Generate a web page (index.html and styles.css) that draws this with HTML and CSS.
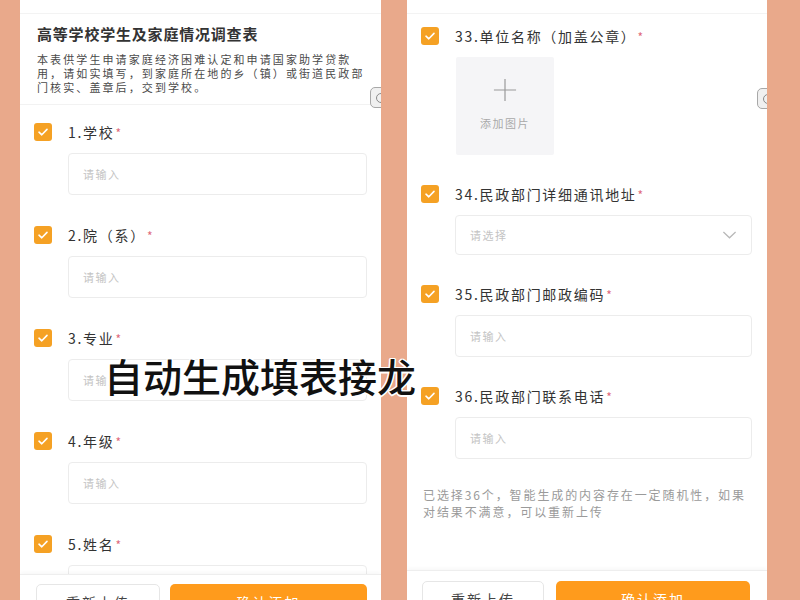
FILE: index.html
```html
<!DOCTYPE html>
<html lang="zh">
<head>
<meta charset="utf-8">
<title>自动生成填表接龙</title>
<link rel="stylesheet" href="styles.css">
</head>
<body>
<div class="stage">
  <section class="panel panel-left">
    <div class="nav"></div>
    <div class="side-tab"><span class="side-ring"></span></div>
    <div class="content">
      <header class="form-head">
        <h1 class="form-title">高等学校学生及家庭情况调查表</h1>
        <p class="form-desc">本表供学生申请家庭经济困难认定和申请国家助学贷款<br>用，请如实填写，到家庭所在地的乡（镇）或街道民政部<br>门核实、盖章后，交到学校。</p>
      </header>
      <div class="items items-left">
        <div class="item">
          <div class="item-row"><span class="check"><svg viewBox="0 0 18 18"><path d="M5 9.2l2.8 2.6L13 6.4" fill="none" stroke="#fff" stroke-width="1.6" stroke-linecap="round" stroke-linejoin="round"/></svg></span><span class="label">1.学校<i class="req">*</i></span></div>
          <div class="field">请输入</div>
        </div>
        <div class="item">
          <div class="item-row"><span class="check"><svg viewBox="0 0 18 18"><path d="M5 9.2l2.8 2.6L13 6.4" fill="none" stroke="#fff" stroke-width="1.6" stroke-linecap="round" stroke-linejoin="round"/></svg></span><span class="label">2.院（系）<i class="req">*</i></span></div>
          <div class="field">请输入</div>
        </div>
        <div class="item">
          <div class="item-row"><span class="check"><svg viewBox="0 0 18 18"><path d="M5 9.2l2.8 2.6L13 6.4" fill="none" stroke="#fff" stroke-width="1.6" stroke-linecap="round" stroke-linejoin="round"/></svg></span><span class="label">3.专业<i class="req">*</i></span></div>
          <div class="field">请输入</div>
        </div>
        <div class="item">
          <div class="item-row"><span class="check"><svg viewBox="0 0 18 18"><path d="M5 9.2l2.8 2.6L13 6.4" fill="none" stroke="#fff" stroke-width="1.6" stroke-linecap="round" stroke-linejoin="round"/></svg></span><span class="label">4.年级<i class="req">*</i></span></div>
          <div class="field">请输入</div>
        </div>
        <div class="item">
          <div class="item-row"><span class="check"><svg viewBox="0 0 18 18"><path d="M5 9.2l2.8 2.6L13 6.4" fill="none" stroke="#fff" stroke-width="1.6" stroke-linecap="round" stroke-linejoin="round"/></svg></span><span class="label">5.姓名<i class="req">*</i></span></div>
          <div class="field">请输入</div>
        </div>
      </div>
    </div>
    <footer class="footer footer-left">
      <button class="btn btn-ghost btn-left">重新上传</button>
      <button class="btn btn-primary btn-right">确认添加</button>
    </footer>
  </section>

  <section class="panel panel-right">
    <div class="nav"></div>
    <div class="side-tab"><span class="side-ring"></span></div>
    <div class="content">
      <div class="items items-right">
        <div class="item">
          <div class="item-row"><span class="check"><svg viewBox="0 0 18 18"><path d="M5 9.2l2.8 2.6L13 6.4" fill="none" stroke="#fff" stroke-width="1.6" stroke-linecap="round" stroke-linejoin="round"/></svg></span><span class="label">33.单位名称（加盖公章）<i class="req">*</i></span></div>
          <div class="upload">
            <svg class="plus" viewBox="0 0 26 26"><path d="M13 1v24M1 13h24" stroke="#9a9a9a" stroke-width="1.3" fill="none"/></svg>
            <span class="upload-text">添加图片</span>
          </div>
        </div>
        <div class="item">
          <div class="item-row"><span class="check"><svg viewBox="0 0 18 18"><path d="M5 9.2l2.8 2.6L13 6.4" fill="none" stroke="#fff" stroke-width="1.6" stroke-linecap="round" stroke-linejoin="round"/></svg></span><span class="label">34.民政部门详细通讯地址<i class="req">*</i></span></div>
          <div class="field field-select"><span>请选择</span><svg class="chev" viewBox="0 0 16 10"><path d="M1.5 1.8L8 8l6.5-6.2" fill="none" stroke="#b8b8b8" stroke-width="1.3"/></svg></div>
        </div>
        <div class="item">
          <div class="item-row"><span class="check"><svg viewBox="0 0 18 18"><path d="M5 9.2l2.8 2.6L13 6.4" fill="none" stroke="#fff" stroke-width="1.6" stroke-linecap="round" stroke-linejoin="round"/></svg></span><span class="label">35.民政部门邮政编码<i class="req">*</i></span></div>
          <div class="field">请输入</div>
        </div>
        <div class="item">
          <div class="item-row"><span class="check"><svg viewBox="0 0 18 18"><path d="M5 9.2l2.8 2.6L13 6.4" fill="none" stroke="#fff" stroke-width="1.6" stroke-linecap="round" stroke-linejoin="round"/></svg></span><span class="label">36.民政部门联系电话<i class="req">*</i></span></div>
          <div class="field">请输入</div>
        </div>
      </div>
      <p class="note">已选择36个，智能生成的内容存在一定随机性，如果<br>对结果不满意，可以重新上传</p>
    </div>
    <footer class="footer footer-right">
      <button class="btn btn-ghost btn-left">重新上传</button>
      <button class="btn btn-primary btn-right">确认添加</button>
    </footer>
  </section>

  <div class="overlay">自动生成填表接龙</div>
</div>
</body>
</html>
```

FILE: styles.css
```css
* { box-sizing: border-box; }
html, body { margin: 0; padding: 0; }
body {
  width: 800px;
  height: 600px;
  overflow: hidden;
  background: #e9a98b;
  font-family: "Noto Sans CJK SC", "Noto Sans", sans-serif;
  color: #333;
}
.stage {
  position: relative;
  width: 800px;
  height: 600px;
  display: flex;
  padding-left: 20px;
  gap: 26px;
}
.panel {
  position: relative;
  height: 600px;
  background: #fff;
  display: flex;
  flex-direction: column;
  overflow: hidden;
}
.panel-left { width: 361px; }
.panel-right { width: 360px; }

.nav {
  flex-shrink: 0;
  height: 14px;
  border-bottom: 1px solid #f3f3f3;
}
.side-tab {
  position: absolute;
  right: -11px;
  top: 87px;
  width: 22px;
  height: 21px;
  border: 1.5px solid #a8a8a8;
  border-radius: 5px;
  background: #f0f0f0;
  display: flex;
  align-items: center;
  justify-content: center;
}
.panel-right .side-tab { top: 88px; right: -12px; }
.side-ring {
  width: 10px;
  height: 10px;
  border: 1.5px solid #8a8a8a;
  border-radius: 50%;
}
.content {
  flex: 1;
  min-height: 0;
  overflow: hidden;
}
.form-head {
  padding: 10px 17px 10px;
  border-bottom: 1px solid #f2f2f2;
}
.form-title {
  margin: 0;
  font-size: 15px;
  line-height: 20px;
  font-weight: 700;
  letter-spacing: 0.8px;
  color: #333;
}
.form-desc {
  margin: 8px 0 0;
  font-size: 11px;
  line-height: 14px;
  letter-spacing: 2.1px;
  color: #4a4a4a;
  white-space: nowrap;
}
.items { padding-left: 14px; }
.items-left { padding-top: 18px; padding-right: 14px; }
.items-right { padding-top: 13px; padding-right: 15px; }
.item { margin-bottom: 31px; }
.items-right .item { margin-bottom: 30px; }
.item-row {
  display: flex;
  align-items: center;
  height: 18px;
  gap: 16px;
}
.check {
  width: 18px;
  height: 18px;
  border-radius: 3px;
  background: #f5a124;
  display: flex;
  flex-shrink: 0;
}
.check svg { width: 18px; height: 18px; }
.label {
  font-size: 14px;
  letter-spacing: 1.7px;
  color: #333;
  white-space: nowrap;
}
.req {
  font-style: normal;
  color: #e06a7c;
  font-size: 12px;
  margin-left: 1px;
}
.field {
  margin: 12px 0 0 34px;
  height: 42px;
  border: 1px solid #ececec;
  border-radius: 4px;
  padding-left: 14px;
  display: flex;
  align-items: center;
  font-size: 11px;
  letter-spacing: 1.5px;
  color: #c4c4c4;
}
.field-select {
  height: 40px;
  justify-content: space-between;
  padding-right: 14px;
}
.chev { width: 15px; height: 10px; }
.upload {
  margin: 12px 0 0 35px;
  width: 98px;
  height: 98px;
  background: #f5f5f7;
  border-radius: 2px;
  display: flex;
  flex-direction: column;
  align-items: center;
  padding-top: 21px;
}
.plus { width: 24px; height: 24px; }
.upload-text {
  margin-top: 13px;
  font-size: 11px;
  letter-spacing: 1.5px;
  color: #a9a9a9;
}
.note {
  margin: -3px 0 0;
  padding-left: 16px;
  font-size: 12px;
  line-height: 17px;
  letter-spacing: 1.9px;
  color: #9a9a9a;
  white-space: nowrap;
}
.footer {
  flex-shrink: 0;
  display: flex;
  border-top: 1px solid #eeeeee;
  box-shadow: 0 -2px 4px rgba(0,0,0,0.03);
  overflow: hidden;
  background: #fff;
}
.footer-left { height: 26px; padding: 9px 0 0 16px; gap: 10px; }
.footer-right { height: 30px; padding: 10px 0 0 15px; gap: 12px; }
.btn {
  flex-shrink: 0;
  height: 36px;
  border-radius: 5px;
  font-family: "Noto Sans CJK SC", "Noto Sans", sans-serif;
  font-size: 14px;
  letter-spacing: 2px;
  padding: 0;
}
.btn-ghost {
  background: #fff;
  border: 1px solid #e6e6e6;
  color: #444;
}
.btn-primary {
  background: #ff9b1c;
  border: none;
  color: #fff;
}
.footer-left .btn-left { width: 124px; }
.footer-left .btn-right { width: 197px; }
.footer-right .btn-left { width: 122px; }
.footer-right .btn-right { width: 194px; }

.overlay {
  position: absolute;
  left: 104px;
  top: 356px;
  font-size: 39px;
  line-height: 1;
  font-weight: 500;
  color: #111;
  white-space: nowrap;
  text-shadow: 1.5px 0 0 #fff, -1.5px 0 0 #fff, 0 1.5px 0 #fff, 0 -1.5px 0 #fff,
    1px 1px 0 #fff, -1px -1px 0 #fff, 1px -1px 0 #fff, -1px 1px 0 #fff;
}
```
